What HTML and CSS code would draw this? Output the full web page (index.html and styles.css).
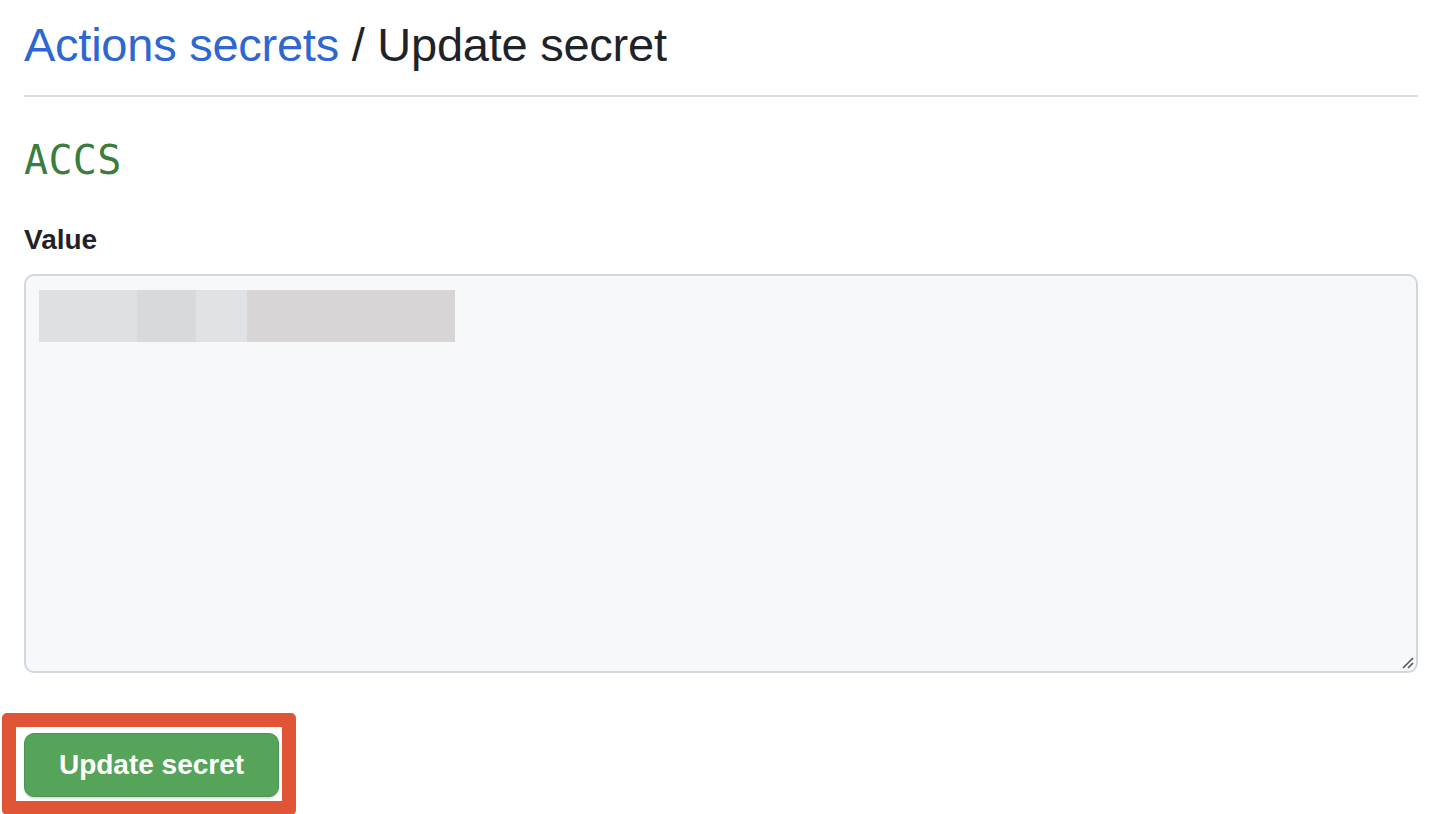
FILE: index.html
```html
<!DOCTYPE html>
<html>
<head>
<meta charset="utf-8">
<link rel="stylesheet" href="styles.css">
</head>
<body>
<main class="page">
  <header class="page-head">
    <h1 class="title"><a class="crumb" href="#">Actions secrets</a> / Update secret</h1>
  </header>
  <h2 class="secret-name">ACCS</h2>
  <form class="form">
    <label class="label">Value</label>
    <div class="textarea">
      <div class="redacted">
        <span class="r r1"></span><span class="r r2"></span><span class="r r3"></span><span class="r r4"></span>
      </div>
      <svg class="grip" width="14" height="14" viewBox="0 0 14 14"><path d="M13 3 L3 13 M13 8 L8 13" stroke="#555" stroke-width="1.6" fill="none"/></svg>
    </div>
    <div class="highlight">
      <button type="button" class="btn">Update secret</button>
    </div>
  </form>
</main>
</body>
</html>
```
FILE: styles.css
```css
html, body { margin: 0; padding: 0; background: #fff; }
body { font-family: "Liberation Sans", Arial, sans-serif; color: #1f2328; }
.page { padding: 0 28px 0 24px; }
.page-head { border-bottom: 2px solid #d8dee4; padding: 17px 0 22px; }
.title { margin: 0; font-size: 47px; font-weight: 400; line-height: 56px; letter-spacing: -0.25px; }
.crumb { color: #2e67d3; text-decoration: none; }
.secret-name { margin: 37px 0 0; font-family: "DejaVu Sans Mono", "Liberation Mono", monospace; font-weight: 400; font-size: 40px; line-height: 52px; color: #3a7d3f; letter-spacing: 0.3px; }
.form { display: flex; flex-direction: column; align-items: flex-start; }
.label { margin-top: 38px; font-size: 28px; font-weight: 700; line-height: 32px; }
.textarea { position: relative; box-sizing: border-box; width: 100%; height: 399px; margin-top: 18px; background: #f6f8fa; border: 2px solid #d0d7de; border-radius: 10px; padding: 14px 13px; }
.redacted { display: flex; height: 52px; }
.r { display: block; height: 100%; }
.r1 { width: 98px; background: #dfe0e2; }
.r2 { width: 59px; background: #d8d9dc; }
.r3 { width: 51px; background: #dfe3e6; }
.r4 { width: 208px; background: #d9d5d6; }
.grip { position: absolute; right: 2px; bottom: 2px; }
.highlight { margin: 40px 0 0 -22px; border: 14px solid #e05535; border-radius: 5px; padding: 6px 3px 4px 8px; background: #fff; }
.btn { display: block; box-sizing: border-box; width: 255px; height: 64px; background: #55a45a; color: #fff; border: 1px solid #4b9350; border-radius: 10px; font-family: "Liberation Sans", Arial, sans-serif; font-weight: 700; font-size: 28px; box-shadow: 0 2px 0 rgba(31,35,40,0.12); cursor: pointer; padding: 0; }
```
